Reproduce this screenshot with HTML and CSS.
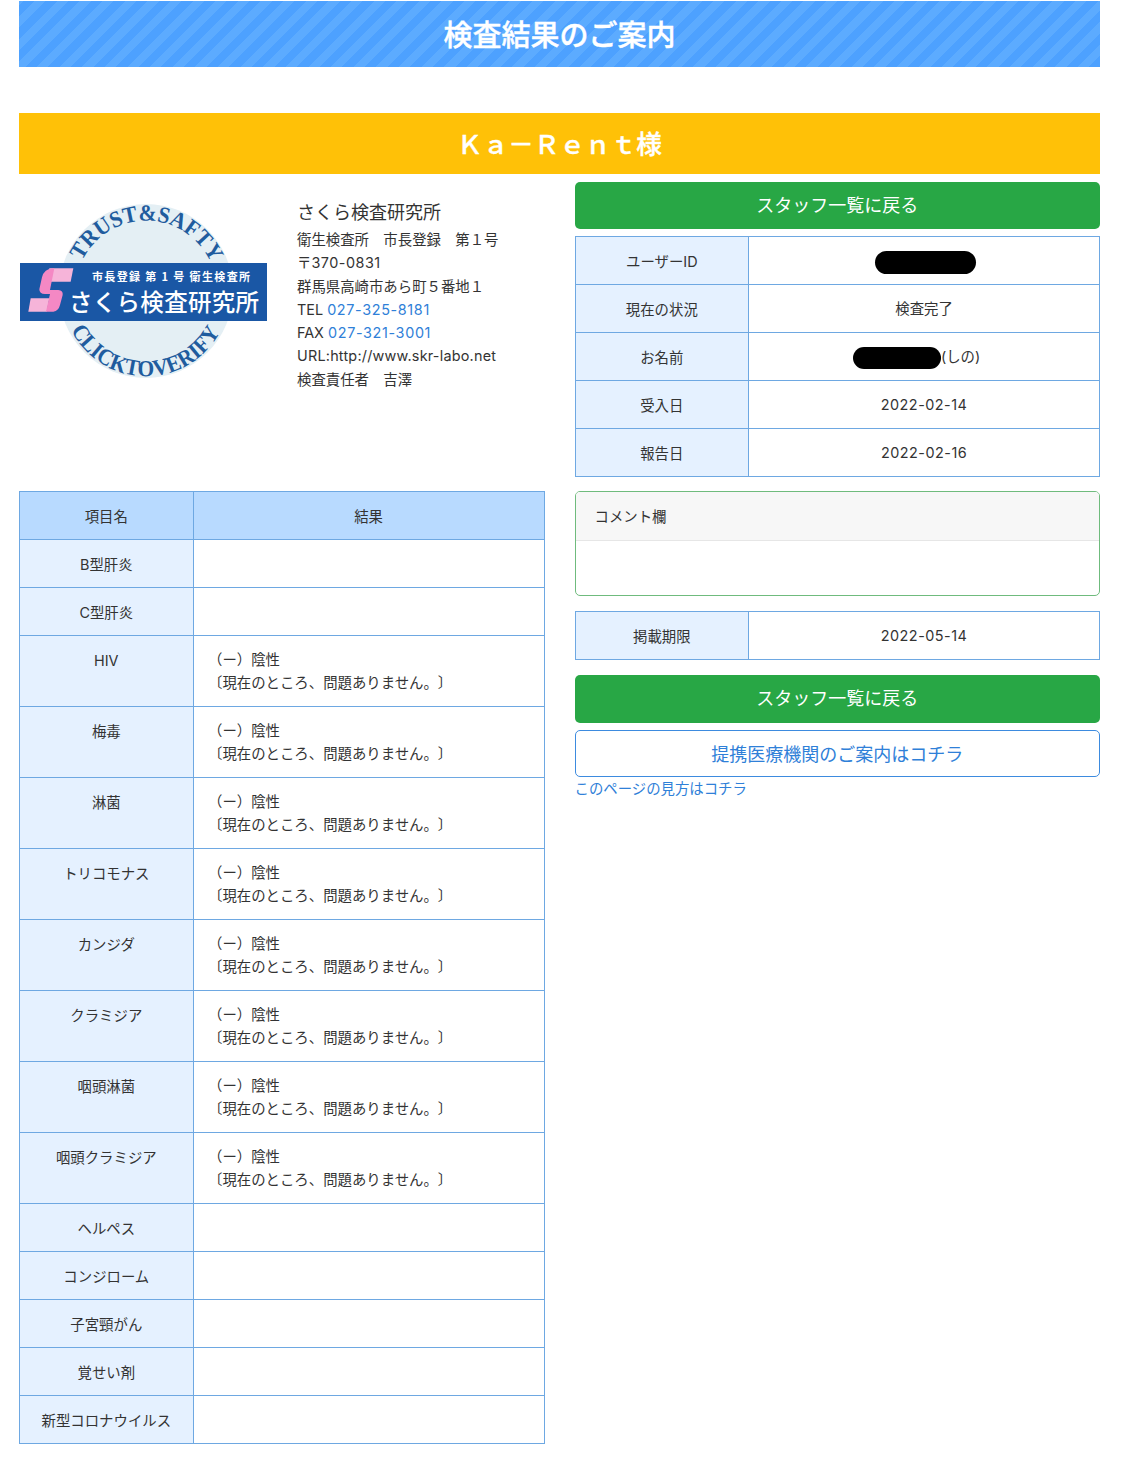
FILE: index.html
```html
<!DOCTYPE html>
<html lang="ja">
<head>
    <title>検査結果のご案内</title>
    <meta charset="UTF-8">
    <link rel="stylesheet" href="styles.css">
</head>
<body>
    <h1 class="page-title">検査結果のご案内</h1>
    <h2 class="user-title">Ｋａ－Ｒｅｎｔ様</h2>
    <div class="columns">
        <div class="col">
            <div class="lab-info">
                <svg class="lab-logo" viewBox="0 0 250 190" width="250" height="190">
                    <defs>
                        <path id="arc-top" d="M 63 69 A 71 71 0 0 1 191 69"/>
                        <path id="arc-bottom" d="M 52 138 A 84 84 0 0 0 202 138"/>
                    </defs>
                    <circle cx="127" cy="99" r="87" fill="#e4eff4"/>
                    <text class="logo-arc"><textPath href="#arc-top" textLength="161" lengthAdjust="spacingAndGlyphs">TRUST&amp;SAFTY</textPath></text>
                    <text class="logo-arc"><textPath href="#arc-bottom" textLength="183" lengthAdjust="spacingAndGlyphs">CLICKTOVERIFY</textPath></text>
                    <rect x="1" y="71" width="247" height="58" fill="#1a57a5"/>
                    <g transform="translate(1 68) scale(0.3333)">
                        <path fill="#f6b4d9" d="M88 25 H160 L152 65 H80 Z"/>
                        <path fill="#f6b4d9" d="M32 115 H88 L80 155 H25 Z"/>
                        <path fill="#f488c4" d="M100 25 Q72 27 66 52 L58 88 Q58 102 75 102 H90 L78 155 H100 Q116 152 120 135 L128 105 Q130 92 115 90 H90 L103 25 Z"/>
                    </g>
                    <text class="logo-small" x="73" y="89" textLength="158">市長登録 第 1 号 衛生検査所</text>
                    <text class="logo-big" x="50" y="119" textLength="190">さくら検査研究所</text>
                </svg>
                <div class="lab-text">
                    <div class="lab-name">さくら検査研究所</div>
                    <div>衛生検査所　市長登録　第１号</div>
                    <div>〒<span class="num">370-0831</span></div>
                    <div>群馬県高崎市あら町５番地１</div>
                    <div>TEL <a class="num" href="#">027-325-8181</a></div>
                    <div>FAX <a class="num" href="#">027-321-3001</a></div>
                    <div class="url">URL:http://www.skr-labo.net</div>
                    <div>検査責任者　吉澤</div>
                </div>
            </div>
            <table class="tbl">
                <tr class="head"><th>項目名</th><th>結果</th></tr>
                <tr><th>B型肝炎</th><td></td></tr>
                <tr><th>C型肝炎</th><td></td></tr>
                <tr><th>HIV</th><td class="result">（ー）陰性<br>〔現在のところ、問題ありません。〕</td></tr>
                <tr><th>梅毒</th><td class="result">（ー）陰性<br>〔現在のところ、問題ありません。〕</td></tr>
                <tr><th>淋菌</th><td class="result">（ー）陰性<br>〔現在のところ、問題ありません。〕</td></tr>
                <tr><th>トリコモナス</th><td class="result">（ー）陰性<br>〔現在のところ、問題ありません。〕</td></tr>
                <tr><th>カンジダ</th><td class="result">（ー）陰性<br>〔現在のところ、問題ありません。〕</td></tr>
                <tr><th>クラミジア</th><td class="result">（ー）陰性<br>〔現在のところ、問題ありません。〕</td></tr>
                <tr><th>咽頭淋菌</th><td class="result">（ー）陰性<br>〔現在のところ、問題ありません。〕</td></tr>
                <tr><th>咽頭クラミジア</th><td class="result">（ー）陰性<br>〔現在のところ、問題ありません。〕</td></tr>
                <tr><th>ヘルペス</th><td></td></tr>
                <tr><th>コンジローム</th><td></td></tr>
                <tr><th>子宮頸がん</th><td></td></tr>
                <tr><th>覚せい剤</th><td></td></tr>
                <tr><th>新型コロナウイルス</th><td></td></tr>
            </table>
        </div>
        <div class="col">
            <a class="btn btn-green" href="#">スタッフ一覧に戻る</a>
            <table class="tbl tbl-status">
                <tr><th>ユーザーID</th><td><span class="blot blot-id"></span></td></tr>
                <tr><th>現在の状況</th><td>検査完了</td></tr>
                <tr><th>お名前</th><td><span class="blot blot-name"></span>(しの)</td></tr>
                <tr><th>受入日</th><td><span class="num">2022-02-14</span></td></tr>
                <tr><th>報告日</th><td><span class="num">2022-02-16</span></td></tr>
            </table>
            <div class="comment">
                <div class="comment-head">コメント欄</div>
                <div class="comment-body"></div>
            </div>
            <table class="tbl tbl-status">
                <tr><th>掲載期限</th><td><span class="num">2022-05-14</span></td></tr>
            </table>
            <a class="btn btn-green" href="#">スタッフ一覧に戻る</a>
            <a class="btn btn-outline" href="#">提携医療機関のご案内はコチラ</a>
            <a class="howto" href="#">このページの見方はコチラ</a>
        </div>
    </div>
</body>
</html>
```

FILE: styles.css
```css
body {
    margin: 0;
    padding: 1px 23px 17px 19px;
    font-family: Inter, "Noto Sans CJK JP", sans-serif;
    font-size: 14.4px;
    line-height: 23px;
    color: #333333;
    background-color: #ffffff;
    text-spacing-trim: space-all;
}
a {
    color: #2f80d8;
    text-decoration: none;
}
.num {
    letter-spacing: 0.5px;
}
a.num {
    letter-spacing: 0.65px;
}
.url {
    letter-spacing: 0.22px;
}
.page-title {
    margin: 0 0 46px;
    height: 66px;
    line-height: 69px;
    text-align: center;
    font-size: 29px;
    font-weight: 500;
    -webkit-text-stroke: 0.4px #ffffff;
    color: #ffffff;
    background: repeating-linear-gradient(-45deg, #4da1ff, #4da1ff 8px, #5cabff 8px, #5cabff 16px);
}
.user-title {
    margin: 0 0 8px;
    height: 61px;
    line-height: 63px;
    text-align: center;
    font-size: 25.6px;
    font-weight: 500;
    -webkit-text-stroke: 0.4px #ffffff;
    color: #ffffff;
    background-color: #ffc107;
}
.columns {
    display: flex;
    gap: 30px;
}
.col {
    flex: 1 1 0;
    min-width: 0;
}
.lab-info {
    display: flex;
    height: 309px;
}
.lab-logo {
    flex: none;
    margin: 10px 28px 0 0;
}
.logo-arc {
    font-family: "Liberation Serif", serif;
    font-size: 23px;
    font-weight: 700;
    fill: #1f5c9e;
}
.logo-small {
    font-family: "Noto Sans CJK JP", sans-serif;
    font-size: 11px;
    font-weight: 700;
    fill: #ffffff;
}
.logo-big {
    font-family: "Noto Sans CJK JP", sans-serif;
    font-size: 23.5px;
    font-weight: 500;
    fill: #ffffff;
}
.lab-text {
    padding-top: 18px;
    line-height: 23.3px;
    white-space: nowrap;
}
.lab-name {
    font-size: 18px;
    line-height: 26px;
    margin-bottom: 2px;
}
.tbl {
    width: 100%;
    table-layout: fixed;
    border-collapse: collapse;
    margin-bottom: 14px;
}
.tbl th,
.tbl td {
    padding: 12px 14.4px;
    border: 1px solid #6ea8e2;
    font-weight: 400;
    vertical-align: top;
    text-align: center;
}
.tbl th {
    padding-top: 13px;
    padding-bottom: 11px;
}
.tbl tr > :first-child {
    box-sizing: border-box;
    width: 33.1%;
    padding-left: 4px;
    padding-right: 4px;
    background-color: #e5f1ff;
}
.tbl td {
    height: 23px;
}
.tbl .head th {
    background-color: #b8daff;
}
.tbl .result {
    text-align: left;
}
.tbl-status td {
    vertical-align: middle;
}
.blot {
    display: inline-block;
    vertical-align: middle;
    margin-top: -2px;
    margin-bottom: -2px;
    background-color: #000000;
    border-radius: 12px;
}
.blot-id {
    width: 101px;
    height: 23px;
    margin-left: 3px;
}
.blot-name {
    width: 88px;
    height: 22px;
    margin-left: -15px;
}
.btn {
    display: block;
    box-sizing: border-box;
    height: 47px;
    line-height: 45px;
    margin-bottom: 7px;
    text-align: center;
    font-size: 18px;
    border: 1px solid transparent;
    border-radius: 5px;
}
.btn-green {
    color: #ffffff;
    background-color: #28a745;
}
.tbl-status + .btn {
    margin-top: 15px;
    height: 48px;
    line-height: 46px;
}
.btn-outline {
    line-height: 47px;
    color: #2f80d8;
    background-color: #ffffff;
    border-color: #3d8bdf;
    margin-bottom: 0;
}
.comment {
    box-sizing: border-box;
    height: 105px;
    margin-bottom: 15px;
    border: 1px solid #6fbb7d;
    border-radius: 5px;
    overflow: hidden;
}
.comment-head {
    height: 48px;
    line-height: 50px;
    padding-left: 19px;
    background-color: #f7f7f7;
    border-bottom: 1px solid #e6e6e6;
}
.howto {
    display: block;
    line-height: 24px;
}
```
